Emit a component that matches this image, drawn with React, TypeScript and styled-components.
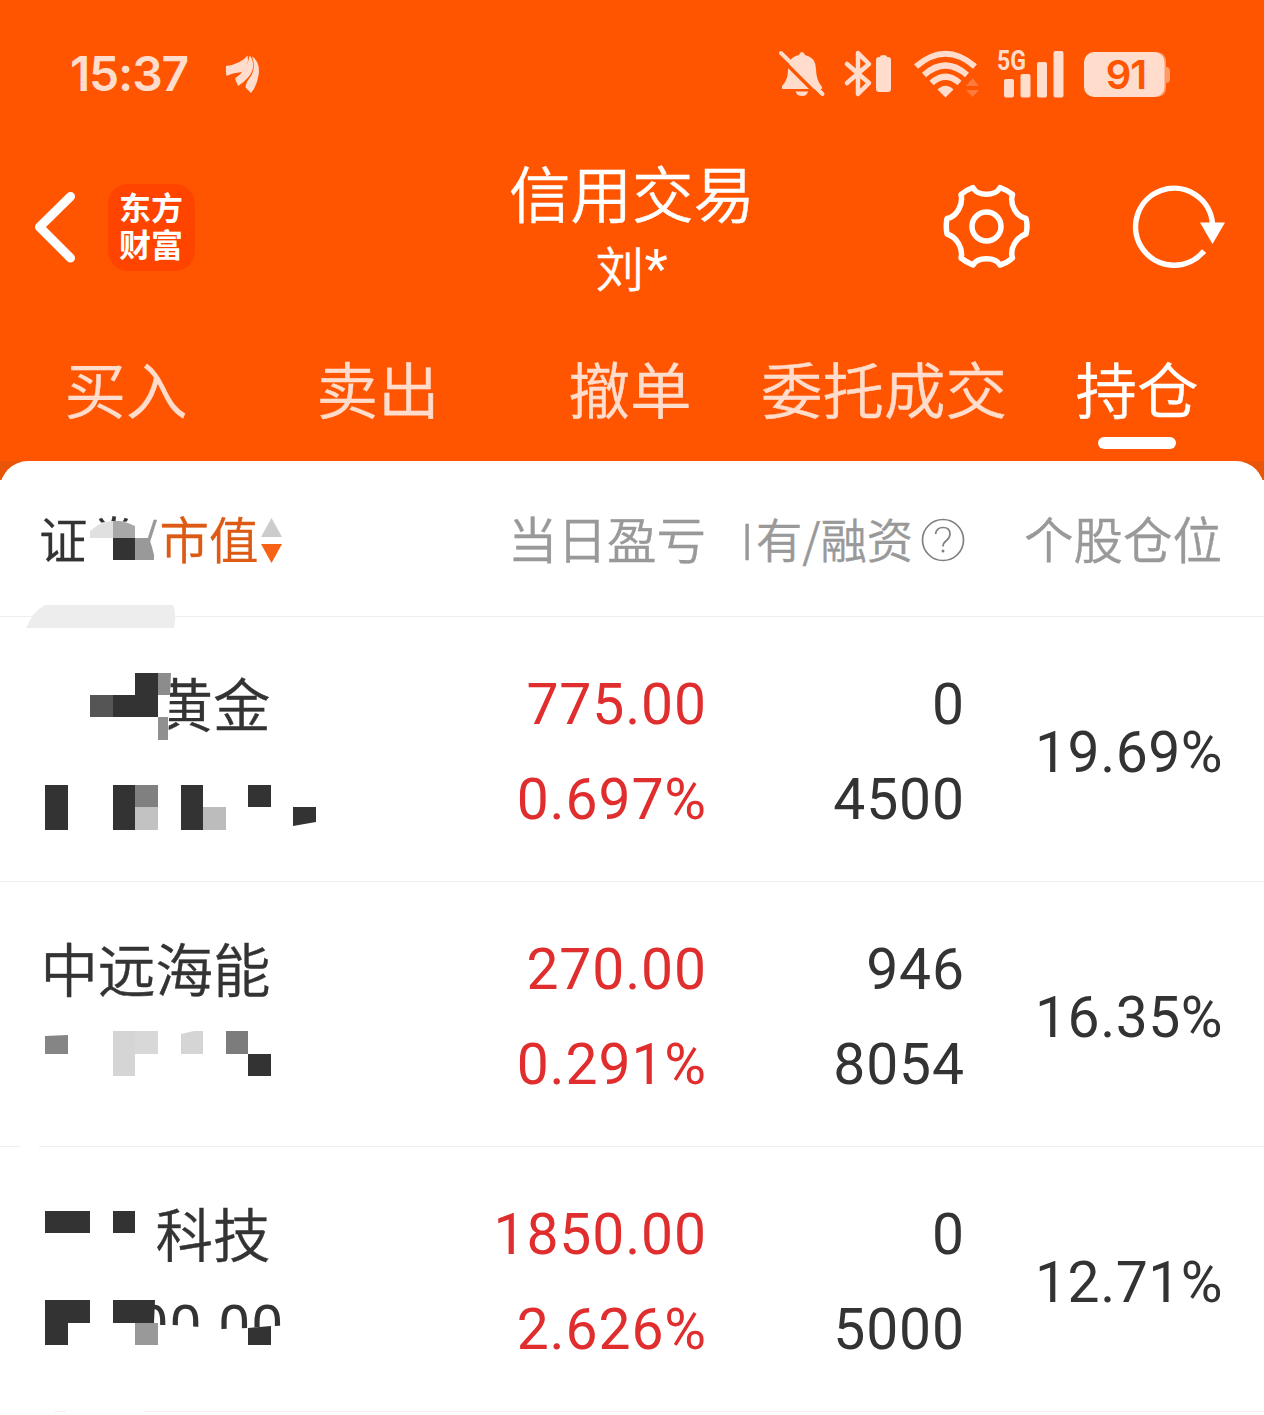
import React from 'react';
import styled, { createGlobalStyle } from 'styled-components';

const Global = createGlobalStyle`
  * { box-sizing: border-box; }
  body { margin: 0; background: #fff; }
`;

const cjk = `'Noto Sans CJK SC', sans-serif`;
const latin = `Roboto, 'Noto Sans CJK SC', sans-serif`;
const firm = `-webkit-text-stroke: 0.4px currentColor;`;

const Screen = styled.main`
  width: 1264px;
  height: 1415px;
  overflow: hidden;
  background: #fff;
  font-family: ${cjk};
  font-weight: 350;
  white-space: nowrap;
`;

const Header = styled.header`
  height: 461px;
  background: #ff5500;
  color: #fff;
`;

const StatusBar = styled.div`
  height: 148px;
  padding: 0 94px 0 70px;
  display: flex;
  align-items: center;
  color: #ffdccb;
`;

const Clock = styled.span`
  font: 600 48px/56px Inter, sans-serif;
  letter-spacing: -1.2px;
  width: 154px;
`;

const StatusIcons = styled.div`
  margin-left: auto;
  display: flex;
  align-items: center;
`;

const NavBar = styled.div`
  height: 190px;
  display: grid;
  grid-template-columns: 1fr 320px 1fr;
`;

const NavSide = styled.div<{ $end?: boolean }>`
  display: flex;
  align-items: center;
  height: 158px;
  justify-content: ${p => (p.$end ? 'flex-end' : 'flex-start')};
  padding: ${p => (p.$end ? '0 38px 0 0' : '0 0 0 31px')};
  gap: ${p => (p.$end ? '100px' : '30px')};
`;

const Logo = styled.div`
  width: 87px;
  height: 87px;
  padding: 4px 0 0 11px;
  border-radius: 20px;
  background: #ff4400;
  font: 700 32px/37px ${cjk};
`;

const Titles = styled.div`
  text-align: center;
  ${firm}
`;

const Title = styled.h1`
  margin: 11px 0 0;
  font-size: 61.5px;
  line-height: 66px;
  font-weight: 350;
`;

const Account = styled.div`
  font-size: 48px;
  line-height: 83px;
  letter-spacing: 0.5px;

  span { font: 400 54px/60px Roboto, sans-serif; -webkit-text-stroke: 0; }
`;

const Tabs = styled.nav`
  height: 123px;
  display: grid;
  grid-template-columns: repeat(3, 252px) 256px 250px;
  ${firm}
`;

const Tab = styled.div<{ $active?: boolean }>`
  display: flex;
  flex-direction: column;
  align-items: center;
  padding-top: 1px;
  font-size: 61.5px;
  line-height: 97px;
  color: ${p => (p.$active ? '#fff' : '#ffdccb')};
`;

const Underline = styled.i`
  width: 78px;
  height: 12px;
  margin-top: 1px;
  border-radius: 6px;
  background: #fff;
`;

const Sheet = styled.section`
  background: linear-gradient(#e85508 19px, #fff 19px);
`;

const SheetInner = styled.div`
  background: #fff;
  border-radius: 28px 28px 0 0;
`;

const columns = `
  display: grid;
  grid-template-columns: 440px 266px 258px 258px;
  position: relative;
`;

const HeadRow = styled.div`
  ${columns}
  height: 156px;
  border-bottom: 1px solid #eee;
  line-height: 70px;
  color: #999;
  ${firm}
`;

const HeadCell = styled.div<{ $small?: boolean }>`
  display: flex;
  align-items: center;
  justify-content: flex-end;
  padding-bottom: 2px;
  font-size: ${p => (p.$small ? '46.3px' : '49.5px')};

  svg { margin: 4px -1px 0 8px; }
`;

const ClippedGlyph = styled.span`
  font: 300 50px/70px Roboto, sans-serif;
  margin: 10px 2px 0 0;
`;

const SortCell = styled.div`
  display: flex;
  align-items: center;
  padding: 0 0 2px 39px;
  font-size: 49.5px;
  color: #333;
  b { font-weight: 350; color: #dc5a14; margin-left: 2px; }
  span { color: #999; }
  svg { margin: 6px 0 0 3px; }
`;

const Row = styled.div`
  ${columns}
  height: 265px;
  border-bottom: 1px solid #eee;
  color: #333;
`;

const Name = styled.div<{ $indent: number }>`
  padding: 38px 0 0 ${p => 40.5 + p.$indent}px;
  font-size: 57.5px;
  line-height: 94px;
  ${firm}
`;

const MarketValue = styled.div`
  font: 400 57px/96px ${latin};
  margin: 0 0 0 -19px;
  letter-spacing: 0.9px;
  -webkit-text-stroke: 0;
`;

const Figures = styled.div<{ $gain?: boolean }>`
  padding-top: 40px;
  margin-right: -1px;
  text-align: right;
  font: 400 57px/95px ${latin};
  letter-spacing: 0.9px;
  color: ${p => (p.$gain ? '#e02d2d' : '#333')};
`;

const Ratio = styled(Figures)`
  padding-top: 0;
  line-height: 272px;
  height: 264px;
  letter-spacing: 0.5px;
`;

const MosaicLayer = styled.svg`
  position: absolute;
  left: 0;
  top: 0;
  overflow: visible;
`;

type Block = [string, string];

function Mosaic({ top, blocks }: { top: number; blocks: Block[] }) {
  return (
    <MosaicLayer width="400" height="1" viewBox={`0 ${top} 400 1`}>
      {blocks.map(([fill, points], i) => <polygon key={i} fill={fill} points={points} />)}
    </MosaicLayer>
  );
}

const rect = (fill: string, x: number, y: number, w: number, h: number): Block =>
  [fill, `${x},${y} ${x + w},${y} ${x + w},${y + h} ${x},${y + h}`];

const dark = '#333333';

const headBlocks: Block[] = [
  ['#ffffff', '84,529 98,523 115,521 130,522 137,527 149,543 154,565 154,578 84,578'],
  ['#e0e0e0', '90,531 98,525 105,522 113,521 113,538 90,538'],
  ['#a8a8a8', '113,521 120,521 128,523 135,526 135,538 113,538'],
  rect(dark, 113, 538, 22, 22),
  ['#999999', '135,538 148,538 150,541 152,547 154,555 154,560 135,560'],
  ['#ededed', '26,628 29,622 33,615 39,609 45,605 173,605 174,608 175,612 175,622 174,628'],
];

const rows = [
  {
    top: 617, name: '黄金', indent: 115, value: '', pnl: '775.00', pct: '0.697%', held: '0', margin: '4500', ratio: '19.69%',
    blocks: [
      ['#ffffff', '150,672 171,672 168,742 150,742'],
      rect(dark, 135, 673, 23, 22), ['#8c8c8c', '158,673 171,673 170,695 158,695'],
      rect('#555555', 90, 695, 23, 22), rect(dark, 113, 695, 45, 22),
      rect('#909090', 158, 717, 10, 23),
      rect(dark, 45, 785, 23, 45), rect(dark, 113, 785, 22, 45),
      rect('#808080', 135, 785, 23, 22), rect('#c2c2c2', 135, 807, 23, 23),
      rect(dark, 181, 785, 22, 45), rect('#bcbcbc', 203, 807, 23, 23),
      rect(dark, 248, 785, 23, 22), [dark, '293,807 316,807 316,822 293,826'],
    ] as Block[],
  },
  {
    top: 882, name: '中远海能', indent: 0, value: '', pnl: '270.00', pct: '0.291%', held: '946', margin: '8054', ratio: '16.35%',
    blocks: [
      ['#858585', '45,1036 68,1035 68,1054 45,1054'],
      rect('#d5d5d5', 113, 1031, 22, 45), rect('#d8d8d8', 135, 1031, 23, 23),
      ['#d5d5d5', '181,1034 194,1031 203,1031 203,1054 181,1054'],
      rect('#7c7c7c', 226, 1031, 22, 23), rect(dark, 248, 1054, 23, 22),
      rect('#ffffff', 20, 1146, 19, 1),
    ] as Block[],
  },
  {
    top: 1147, name: '科技', indent: 115, value: '00.00', pnl: '1850.00', pct: '2.626%', held: '0', margin: '5000', ratio: '12.71%',
    blocks: [
      ['#ffffff', '60,1290 154,1290 154,1325 174,1325 200,1327 222,1329 248,1328 290,1325 290,1360 60,1360'],
      rect(dark, 45, 1211, 45, 22), rect(dark, 113, 1211, 22, 22),
      rect(dark, 45, 1300, 45, 23), rect(dark, 45, 1323, 23, 22),
      ['#333333', '113,1300 155,1300 154,1323 113,1323'],
      rect('#999999', 135, 1323, 23, 22),
      [dark, '248,1328 271,1326 271,1345 248,1345'],
      rect('#ffffff', 0, 1411, 55, 1), rect('#ffffff', 66, 1411, 78, 1),
    ] as Block[],
  },
];

function BackIcon() {
  return (
    <svg width="47" height="74" viewBox="32 190 47 74" fill="none" stroke="#fff" strokeWidth="9" strokeLinecap="round" strokeLinejoin="round">
      <path d="M71.500 196.500 40.500 227 71.500 258" />
    </svg>
  );
}

function GearIcon() {
  return (
    <svg width="90" height="90" viewBox="941 182 90 90" fill="none" stroke="#fff" strokeWidth="5.500" strokeLinejoin="round">
      <path d="M973 187.500C977 196.500 996 196.500 1000 187.500Q1007 190 1012.500 194.500C1009.500 204 1016 216.500 1026 218.500Q1028 226 1026 234C1016 237 1009.500 249 1012.500 258Q1007 263 1000 265C996 256.500 977 256.500 973 265Q966 262 961 258C963.500 249 957 237 947 234Q945.500 226 947 218.500C957 216.500 963.500 204 961 194.500Q966 190 973 187.500Z" />
      <circle cx="986.500" cy="226.500" r="14.500" />
    </svg>
  );
}

function RefreshIcon() {
  return (
    <svg width="95" height="90" viewBox="1131 182 95 90" fill="none" stroke="#fff" strokeWidth="5.500">
      <path d="M1204 251A38.500 38.500 0 1 1 1212.500 224" />
      <path d="M1200 222.500H1225L1212.500 244Z" fill="#fff" stroke="none" />
    </svg>
  );
}

function LeafIcon() {
  return (
    <svg width="36" height="40" viewBox="224 54 36 40" fill="#ffdccb">
      <path d="M226 66Q241 64 247.500 55.500Q250 66 242 72Q232 73 226.500 76Q225.500 70 226 66Z" />
      <path d="M249.500 55.500L251 57Q256.500 67 248.500 77Q244 82.500 238 86L235 78.500Q248 69 249.500 55.500Z" />
      <path d="M252 56.500Q260 61 258.800 74Q257 86 251 93L245.500 87.500Q246 82 250 77.500Q256.500 68 252 56.500Z" />
    </svg>
  );
}

function SystemIcons() {
  return (
    <svg width="392" height="60" viewBox="778 44 392 60" fill="#ffdccb">
      <path d="M782 89V86Q788 80 788 70Q788 57 799 55Q800 52 802 52Q804 52 805 55Q815.500 57 816 69Q816 80 822 87V89Z" />
      <path d="M795.500 91.500H808Q807 96 802 96Q797 96 795.500 91.500Z" />
      <path d="M778.500 56 820 97.500" stroke="#ff5500" strokeWidth="3.500" />
      <path d="M781 53 822.500 94" stroke="#ffdccb" strokeWidth="4" strokeLinecap="round" />
      <path d="M847 64 869 83 858 94V53L869 64 847 83" fill="none" stroke="#ffdccb" strokeWidth="4.500" strokeLinecap="round" strokeLinejoin="round" />
      <path d="M879 57H880Q880 55 883.500 55Q887 55 887 57H888Q891 57 891 60V89Q891 92 888 92H879Q876 92 876 89V60Q876 57 879 57Z" />
      <g fill="none" stroke="#ffdccb" strokeWidth="6">
        <path d="M916 66.500Q945.500 41 975 66.500" />
        <path d="M924 75Q945.500 56 967 75" />
        <path d="M931.500 83Q945.500 70.500 959.500 83" />
      </g>
      <path d="M937.500 89.500Q945.500 82 953.500 89.500L945.500 97.500Z" />
      <path d="M966 86 972.500 78 979 86ZM966 90H979L972.500 97Z" fill="#ff7a3b" />
      <text x="997" y="69.500" fontFamily="Roboto, sans-serif" fontWeight="700" fontSize="27" textLength="29" lengthAdjust="spacingAndGlyphs">5G</text>
      <rect x="1004" y="79" width="10" height="18.500" rx="2" />
      <rect x="1020.500" y="74" width="10" height="23.500" rx="2" />
      <rect x="1037" y="62" width="10" height="35.500" rx="2" />
      <rect x="1053.500" y="51" width="10" height="46.500" rx="2" />
      <path d="M1155 52Q1166 52 1166 62V67Q1170 67 1170 71V79Q1170 83 1166 83V88Q1166 97 1155 97Z" fill="#ff9966" />
      <rect x="1084" y="52" width="80.500" height="45" rx="10" />
      <text x="1126" y="89" textAnchor="middle" fontFamily="Inter, sans-serif" fontWeight="600" fontSize="40" letterSpacing="-1" fill="#ff5500">91</text>
    </svg>
  );
}

const SortIcon = () => (
  <svg width="22" height="48" viewBox="261 517 22 48">
    <path d="M271.500 518 282 537H261Z" fill="#ccc" />
    <path d="M271.500 563 261 544H282Z" fill="#f86216" />
  </svg>
);

const HelpIcon = () => (
  <svg width="44" height="44" viewBox="0 0 44 44" fill="none" stroke="#808080" strokeWidth="1.700">
    <circle cx="22" cy="22" r="20.500" />
    <path d="M14.500 16Q15.500 9.500 22 9.500Q29 9.500 29 16Q29 19.500 25.500 22.500Q22 25 22 28.500" />
    <circle cx="22" cy="33" r="1.500" fill="#808080" stroke="none" />
  </svg>
);

export default function App() {
  return (
    <Screen>
      <Global />
      <Header>
        <StatusBar>
          <Clock>15:37</Clock>
          <LeafIcon />
          <StatusIcons><SystemIcons /></StatusIcons>
        </StatusBar>
        <NavBar>
          <NavSide>
            <BackIcon />
            <Logo>东方<br />财富</Logo>
          </NavSide>
          <Titles>
            <Title>信用交易</Title>
            <Account>刘<span>*</span></Account>
          </Titles>
          <NavSide $end>
            <GearIcon />
            <RefreshIcon />
          </NavSide>
        </NavBar>
        <Tabs>
          <Tab>买入</Tab>
          <Tab>卖出</Tab>
          <Tab>撤单</Tab>
          <Tab>委托成交</Tab>
          <Tab $active>持仓<Underline /></Tab>
        </Tabs>
      </Header>
      <Sheet>
        <SheetInner>
          <HeadRow>
            <SortCell>证券<span>/</span><b>市值</b><SortIcon /></SortCell>
            <HeadCell>当日盈亏</HeadCell>
            <HeadCell $small><ClippedGlyph>I</ClippedGlyph>有/融资<HelpIcon /></HeadCell>
            <HeadCell>个股仓位</HeadCell>
            <Mosaic top={461} blocks={headBlocks} />
          </HeadRow>
          {rows.map(r => (
            <Row key={r.top}>
              <Name $indent={r.indent}>
                {r.name}
                {r.value && <MarketValue>{r.value}</MarketValue>}
              </Name>
              <Figures $gain><div>{r.pnl}</div><div>{r.pct}</div></Figures>
              <Figures><div>{r.held}</div><div>{r.margin}</div></Figures>
              <Ratio>{r.ratio}</Ratio>
              <Mosaic top={r.top} blocks={r.blocks} />
            </Row>
          ))}
        </SheetInner>
      </Sheet>
    </Screen>
  );
}
